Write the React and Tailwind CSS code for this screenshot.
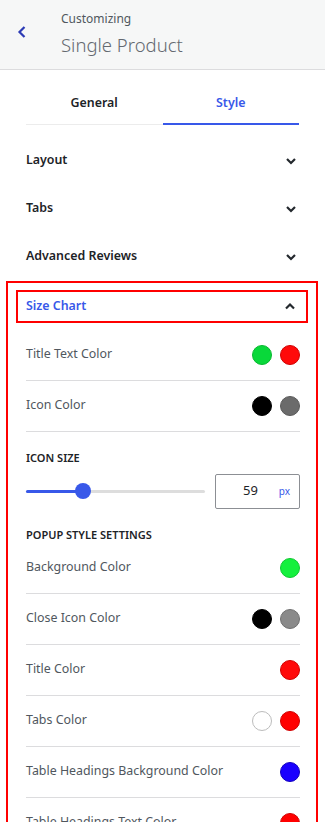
import React from 'react';

const Chevron = ({ up }) => (
  <svg width="12" height="8" viewBox="0 0 12 8" className="shrink-0">
    <polyline
      points={up ? '2,6.5 6,2.5 10,6.5' : '2,2 6,6 10,2'}
      fill="none"
      stroke="#23282d"
      strokeWidth="2.2"
    />
  </svg>
);

const Dot = ({ color, border }) => (
  <span
    className="block w-[20px] h-[20px] rounded-full border"
    style={{ backgroundColor: color, borderColor: border }}
  />
);

const ColorRow = ({ label, colors }) => (
  <div className="flex items-center justify-between h-[51px] border-b border-[#dcdcde]">
    <span className="text-[12.4px] text-[#50575e]">{label}</span>
    <div className="flex gap-[8px]">
      {colors.map((c, i) => (
        <Dot key={i} color={c[0]} border={c[1]} />
      ))}
    </div>
  </div>
);

const Section = ({ title }) => (
  <div className="flex items-center justify-between h-[48px] pl-[26px] pr-[28px]">
    <span className="text-[12.4px] font-semibold text-[#1d2327]">{title}</span>
    <Chevron />
  </div>
);

export default function App() {
  return (
    <div className="w-[325px] min-h-[822px] bg-white font-['Noto_Sans',sans-serif]">
      {/* header */}
      <div className="h-[70px] bg-[#f6f7f7] border-b border-[#dcdcde] flex items-center">
        <div className="w-[61px] flex justify-start pl-[16px] -mt-[6px]">
          <svg width="12" height="16" viewBox="0 0 12 16">
            <polyline points="8.5,3 3.5,8 8.5,13" fill="none" stroke="#2c3bb5" strokeWidth="2.2" />
          </svg>
        </div>
        <div className="flex flex-col">
          <span className="text-[12px] leading-[16px] text-[#50575e]">Customizing</span>
          <span className="text-[18.5px] leading-[28px] font-light text-[#646970] mt-[4px]">Single Product</span>
        </div>
      </div>

      {/* tabs */}
      <div className="px-[26px] pt-[24px] pb-[12px]">
        <div className="flex border-b border-[#ececec]">
          <div className="flex-1 text-center text-[12.4px] font-semibold text-[#1d2327] pb-[10px]">General</div>
          <div className="flex-1 text-center text-[12.4px] font-semibold text-[#3858e9] pb-[10px] border-b-2 border-[#3858e9] -mb-[1px]">Style</div>
        </div>
      </div>

      <Section title="Layout" />
      <Section title="Tabs" />
      <Section title="Advanced Reviews" />

      {/* size chart */}
      <div className="ml-[6px] w-[312px] border-2 border-[#ff0000] border-b-0 pt-[7px] pb-[40px]">
        <div className="mx-[8px] h-[33px] border-2 border-[#ff0000] flex items-center justify-between pl-[8px] pr-[10px]">
          <span className="text-[12.4px] font-semibold text-[#3858e9]">Size Chart</span>
          <Chevron up />
        </div>

        <div className="pl-[18px] pr-[16px] mt-[7px]">
          <ColorRow label="Title Text Color" colors={[['#09d83a', '#08b830'], ['#ff0a0a', '#d00000']]} />
          <ColorRow label="Icon Color" colors={[['#000000', '#000000'], ['#6b6b6b', '#5a5a5a']]} />

          <div className="pt-[18px] text-[11px] leading-[16px] font-semibold text-[#1d2327] uppercase">Icon Size</div>
          <div className="mt-[8px] flex items-center h-[35px]">
            <div className="relative w-[179px] h-[3px] bg-[#dddddd] rounded">
              <div className="absolute left-0 top-0 h-[3px] w-[56px] bg-[#3858e9] rounded" />
              <div className="absolute left-[49px] top-[-6.5px] w-[16px] h-[16px] rounded-full bg-[#3858e9]" />
            </div>
            <div className="ml-auto w-[85px] h-[35px] border border-[#8c8f94] rounded-[2px] flex items-center pl-[27px] pr-[9px]">
              <span className="text-[13px] text-[#1d2327]">59</span>
              <span className="ml-auto text-[10px] text-[#3858e9]">px</span>
            </div>
          </div>

          <div className="mt-[18px] text-[11px] leading-[16px] font-semibold text-[#1d2327] uppercase">Popup Style Settings</div>

          <ColorRow label="Background Color" colors={[['#14f03d', '#10c832']]} />
          <ColorRow label="Close Icon Color" colors={[['#000000', '#000000'], ['#8a8a8a', '#707070']]} />
          <ColorRow label="Title Color" colors={[['#ff0a0a', '#d00000']]} />
          <ColorRow label="Tabs Color" colors={[['#ffffff', '#bcbcbc'], ['#ff0000', '#d00000']]} />
          <ColorRow label="Table Headings Background Color" colors={[['#1a00ff', '#1200c0']]} />
          <ColorRow label="Table Headings Text Color" colors={[['#ff0000', '#d00000']]} />
        </div>
      </div>
    </div>
  );
}
